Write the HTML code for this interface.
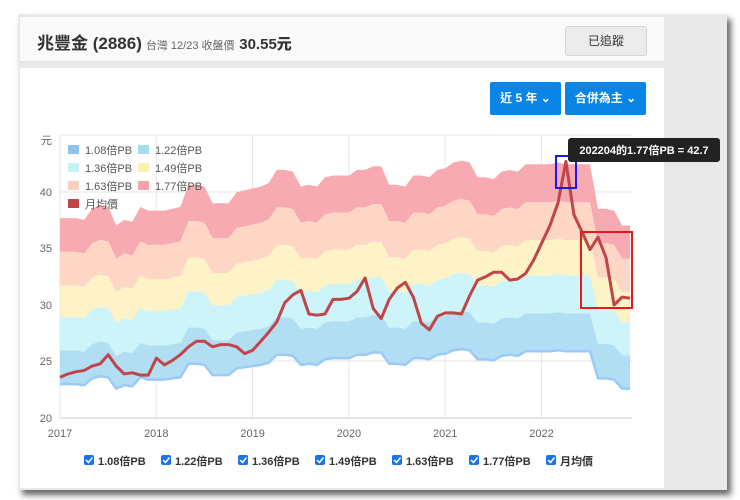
<!DOCTYPE html>
<html><head><meta charset="utf-8">
<style>
*{margin:0;padding:0;box-sizing:border-box}
body{width:740px;height:500px;background:#fff;position:relative;overflow:hidden;font-family:"Liberation Sans","Noto Sans CJK TC",sans-serif}
.panel{position:absolute;left:18px;top:14px;width:709px;height:476px;background:#e9e9e9;box-shadow:4px 5px 6px rgba(0,0,0,.6)}
.card{position:absolute;background:#fff;left:20px;width:644px}
.hdr{top:17px;height:45px;background:#fafafa;border-bottom:1px solid #e3e3e3}
.ttl{position:absolute;left:17px;top:12px;font-size:17px;color:#333;white-space:nowrap;font-weight:bold}
.ttl small{font-size:11px;color:#666;margin-left:4px;font-weight:normal}
.ttl b{font-size:15px;color:#333}
.follow{position:absolute;left:545px;top:9px;width:82px;height:30px;background:#ececec;border:1px solid #d6d6d6;border-radius:3px;font-size:12px;color:#333;text-align:center;line-height:28px}
.chart{top:68px;height:420px}
.btn{position:absolute;top:14px;height:33px;background:#0a84e6;color:#fff;font-size:12px;font-weight:bold;text-align:center;line-height:33px;border-radius:2px}
svg{position:absolute;left:0;top:0}
</style></head><body>
<div class="panel"></div>
<div class="card hdr"><div class="ttl">兆豐金 (2886)<small>台灣 12/23 收盤價</small> <b>30.55元</b></div><div class="follow">已追蹤</div></div>
<div class="card chart">
<div class="btn" style="left:470px;width:71px">近 5 年 ⌄</div>
<div class="btn" style="left:545px;width:81px">合併為主 ⌄</div>
</div>
<svg id="s" width="740" height="500" xmlns="http://www.w3.org/2000/svg" font-family="Liberation Sans, Noto Sans CJK TC, sans-serif"></svg>
<script>
var L=[23,23,23,22.9,23.5,23.7,23.6,22.6,22.9,22.8,23.6,23.4,
23.4,23.4,23.5,23.6,24.8,24.8,24.7,23.8,23.8,23.8,24.4,24.5,
24.6,24.7,24.9,25.6,25.6,25.5,24.7,24.8,24.7,25.2,25.3,25.3,
25.3,25.6,25.6,25.8,25.8,24.8,24.8,24.7,25.3,25.3,25.2,25.6,
25.7,26,26.1,26,25.2,25.2,25.1,25.5,25.6,25.5,25.9,25.9,
25.9,25.9,26,25.9,25.9,25.9,25.9,23.5,23.5,23.4,22.6,22.6];
var P=[23.6,23.9,24.1,24.2,24.6,24.8,25.6,24.6,23.9,24,23.8,23.8,
25.3,24.7,25.1,25.6,26.3,26.8,26.8,26.3,26.5,26.5,26.3,25.7,
26,26.8,27.6,28.5,30.2,30.9,31.3,29.2,29.1,29.2,30.5,30.5,
30.6,31.2,32.4,29.7,28.8,30.5,31.5,32,30.7,28.4,27.8,29,
29.3,29.3,29.2,30.8,32.2,32.5,32.9,32.9,32.2,32.3,32.8,34,
35.5,37,39,42.7,38,36.5,34.9,36,34.2,30,30.7,30.6];
function X(i){return 60+i*8.03}function Y(v){return 418-(v-20)*11.3}
var r=[1.08,1.22,1.36,1.49,1.63,1.77],cols=["#b2def3","#cdf4f8","#fdf3c6","#fdd6c6","#f7aab2"];
var h='';
[135,192,248,305,361].forEach(function(y){h+='<line x1="60" x2="632" y1="'+y+'" y2="'+y+'" stroke="#e6e6e6"/>'});
for(var k=0;k<6;k++){var x=60+k*96.3;h+='<line x1="'+x+'" x2="'+x+'" y1="135" y2="418" stroke="#e6e6e6"/>'}
for(var b=0;b<5;b++){var d='M';for(var i=0;i<72;i++)d+=X(i).toFixed(1)+','+Y(L[i]*r[b+1]/1.08).toFixed(1)+' L';
for(var i=71;i>=0;i--)d+=X(i).toFixed(1)+','+Y(L[i]*r[b]/1.08).toFixed(1)+(i?' L':'Z');h+='<path d="'+d+'" fill="'+cols[b]+'"/>'}
var d='M';for(var i=0;i<72;i++)d+=X(i).toFixed(1)+','+Y(L[i]).toFixed(1)+(i<71?' L':'');
h+='<path d="'+d+'" fill="none" stroke="#9ccaf6" stroke-width="2.5"/>';
h+='<line x1="60" x2="632" y1="418" y2="418" stroke="#ccc"/>';
d='M';for(var i=0;i<72;i++)d+=X(i).toFixed(1)+','+Y(P[i]).toFixed(1)+(i<71?' L':'');
h+='<path d="'+d+'" fill="none" stroke="#c0454a" stroke-width="3" stroke-linejoin="round"/>';
[[40,192],[35,248],[30,305],[25,361],[20,418]].forEach(function(a){h+='<text x="52" y="'+(a[1]+4)+'" font-size="11" fill="#666" text-anchor="end">'+a[0]+'</text>'});
h+='<text x="41" y="144" font-size="11" fill="#666">元</text>';
for(var k=0;k<6;k++)h+='<text x="'+(60+k*96.3)+'" y="437" font-size="11" fill="#666" text-anchor="middle">'+(2017+k)+'</text>';
var lg=[["#8fc3ee","1.08倍PB",68,150],["#a6dcee","1.22倍PB",138,150],["#c9f1f5","1.36倍PB",68,168],["#fcefb2","1.49倍PB",138,168],["#f9d0bf","1.63倍PB",68,186],["#f6a4ac","1.77倍PB",138,186],["#c0454a","月均價",68,204]];
lg.forEach(function(a){h+='<rect x="'+a[2]+'" y="'+(a[3]-5)+'" width="11" height="9" fill="'+a[0]+'"/><text x="'+(a[2]+17)+'" y="'+(a[3]+4)+'" font-size="11" fill="#555">'+a[1]+'</text>'});
h+='<rect x="556" y="156" width="20" height="32" fill="none" stroke="#1a1ae6" stroke-width="2"/>';
h+='<rect x="581" y="232" width="51" height="76" fill="none" stroke="#e61a1a" stroke-width="2"/>';
h+='<rect x="568" y="138" width="152" height="24" rx="3" fill="#222"/><text x="644" y="154" font-size="11" font-weight="bold" fill="#fff" text-anchor="middle">202204的1.77倍PB = 42.7</text>';
var cb=[["1.08倍PB",84],["1.22倍PB",161],["1.36倍PB",238],["1.49倍PB",315],["1.63倍PB",392],["1.77倍PB",469],["月均價",546]];
cb.forEach(function(a){h+='<rect x="'+a[1]+'" y="455" width="10" height="10" rx="2" fill="#1a73e8"/><path d="M'+(a[1]+2)+',460 l2.5,2.5 l4,-5" stroke="#fff" stroke-width="1.5" fill="none"/><text x="'+(a[1]+14)+'" y="465" font-size="11" font-weight="bold" fill="#333">'+a[0]+'</text>'});
document.getElementById('s').innerHTML=h;
</script>
</body></html>
